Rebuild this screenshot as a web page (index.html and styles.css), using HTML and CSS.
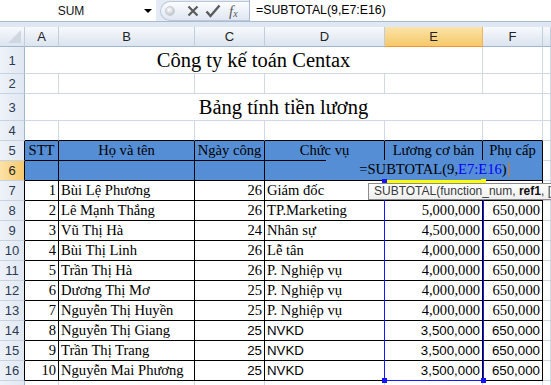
FILE: index.html
```html
<!DOCTYPE html>
<html lang="vi">

<head>
    <meta charset="UTF-8">
    <title>Bảng tính tiền lương</title>
    <link rel="stylesheet" href="styles.css">
</head>

<body>
    <div class="excel">
        <!-- thanh công thức -->
        <div class="toolbar">
            <div class="name-box"><span class="name">SUM</span><span class="arrow"></span></div>
            <div class="fx-buttons">
                <span class="dot"></span>
                <svg class="btn" width="14" height="14" viewBox="0 0 14 14">
                    <path d="M2.5 2.5 L11.5 11.5 M11.5 2.5 L2.5 11.5" stroke="#5b5b5b" stroke-width="2.2" fill="none" />
                </svg>
                <svg class="btn" width="16" height="14" viewBox="0 0 16 14">
                    <path d="M1.5 7.5 L5.5 12 L14.5 1.5" stroke="#5b5b5b" stroke-width="2.4" fill="none" />
                </svg>
                <span class="fx"><i>f</i><sub>x</sub></span>
            </div>
            <div class="formula-input">=SUBTOTAL(9,E7:E16)</div>
        </div>
        <div class="band"></div>

        <!-- bảng tính -->
        <div class="sheet">
            <table>
                <colgroup>
                    <col class="c-rh">
                    <col class="c-a">
                    <col class="c-b">
                    <col class="c-c">
                    <col class="c-d">
                    <col class="c-e">
                    <col class="c-f">
                    <col class="c-g">
                </colgroup>
                <tr class="col-head">
                    <th class="corner"><span class="tri"></span></th>
                    <th>A</th>
                    <th>B</th>
                    <th>C</th>
                    <th>D</th>
                    <th class="sel">E</th>
                    <th>F</th>
                    <th></th>
                </tr>
                <tr class="title">
                    <th class="rh">1</th>
                    <td colspan="5" class="center">Công ty kế toán Centax</td>
                    <td></td>
                    <td></td>
                </tr>
                <tr>
                    <th class="rh">2</th>
                    <td></td><td></td><td></td><td></td><td></td><td></td><td></td>
                </tr>
                <tr class="title">
                    <th class="rh">3</th>
                    <td colspan="6" class="center">Bảng tính tiền lương</td>
                    <td></td>
                </tr>
                <tr class="above">
                    <th class="rh">4</th>
                    <td></td><td></td><td></td><td></td><td></td><td></td><td></td>
                </tr>
                <tr class="head">
                    <th class="rh">5</th>
                    <td>STT</td>
                    <td>Họ và tên</td>
                    <td>Ngày công</td>
                    <td>Chức vụ</td>
                    <td>Lương cơ bản</td>
                    <td>Phụ cấp</td>
                    <td class="out"></td>
                </tr>
                <tr class="head">
                    <th class="rh sel">6</th>
                    <td></td><td></td><td></td><td></td><td></td><td></td>
                    <td class="out"></td>
                </tr>
                <tr class="row">
                    <th class="rh">7</th>
                    <td class="num">1</td><td>Bùi Lệ Phương</td><td class="num">26</td><td>Giám đốc</td>
                    <td class="num"></td><td class="num"></td><td class="out"></td>
                </tr>
                <tr class="row">
                    <th class="rh">8</th>
                    <td class="num">2</td><td>Lê Mạnh Thắng</td><td class="num">26</td><td>TP.Marketing</td>
                    <td class="num">5,000,000</td><td class="num">650,000</td><td class="out"></td>
                </tr>
                <tr class="row">
                    <th class="rh">9</th>
                    <td class="num">3</td><td>Vũ Thị Hà</td><td class="num">24</td><td>Nhân sự</td>
                    <td class="num">4,500,000</td><td class="num">650,000</td><td class="out"></td>
                </tr>
                <tr class="row">
                    <th class="rh">10</th>
                    <td class="num">4</td><td>Bùi Thị Linh</td><td class="num">26</td><td>Lễ tân</td>
                    <td class="num">4,000,000</td><td class="num">650,000</td><td class="out"></td>
                </tr>
                <tr class="row">
                    <th class="rh">11</th>
                    <td class="num">5</td><td>Trần Thị Hà</td><td class="num">26</td><td>P. Nghiệp vụ</td>
                    <td class="num">4,000,000</td><td class="num">650,000</td><td class="out"></td>
                </tr>
                <tr class="row">
                    <th class="rh">12</th>
                    <td class="num">6</td><td>Dương Thị Mơ</td><td class="num">25</td><td>P. Nghiệp vụ</td>
                    <td class="num">4,000,000</td><td class="num">650,000</td><td class="out"></td>
                </tr>
                <tr class="row">
                    <th class="rh">13</th>
                    <td class="num">7</td><td>Nguyễn Thị Huyền</td><td class="num">25</td><td>P. Nghiệp vụ</td>
                    <td class="num">4,000,000</td><td class="num">650,000</td><td class="out"></td>
                </tr>
                <tr class="row">
                    <th class="rh">14</th>
                    <td class="num">8</td><td>Nguyễn Thị Giang</td><td class="num sans">25</td><td class="sans">NVKD</td>
                    <td class="num sans">3,500,000</td><td class="num sans">650,000</td><td class="out"></td>
                </tr>
                <tr class="row">
                    <th class="rh">15</th>
                    <td class="num">9</td><td>Trần Thị Trang</td><td class="num sans">25</td><td class="sans">NVKD</td>
                    <td class="num sans">3,500,000</td><td class="num sans">650,000</td><td class="out"></td>
                </tr>
                <tr class="row">
                    <th class="rh">16</th>
                    <td class="num">10</td><td>Nguyễn Mai Phương</td><td class="num sans">25</td><td class="sans">NVKD</td>
                    <td class="num sans">3,500,000</td><td class="num sans">650,000</td><td class="out"></td>
                </tr>
                <tr>
                    <th class="rh"></th>
                    <td></td><td></td><td></td><td></td><td></td><td></td><td></td>
                </tr>
            </table>

            <!-- ô đang sửa E6 -->
            <div class="edit-cell">=SUBTOTAL(9,<span class="ref">E7:E16</span>)<span class="caret"></span></div>

            <!-- vùng tham chiếu E7:E16 -->
            <div class="range">
                <span class="top-bar"></span>
                <span class="handle tl"></span>
                <span class="handle tr"></span>
                <span class="handle bl"></span>
                <span class="handle br"></span>
            </div>

            <!-- gợi ý hàm -->
            <div class="tip">SUBTOTAL(function_num, <b>ref1</b>, [</div>
        </div>
    </div>
</body>

</html>
```

FILE: styles.css
```css
* {
    margin: 0;
    padding: 0;
    box-sizing: border-box;
}

body {
    width: 551px;
    height: 385px;
    overflow: hidden;
    background-color: #fff;
    font-family: "Liberation Serif", "Times New Roman", serif;
}

.excel {
    width: 551px;
    height: 385px;
    overflow: hidden;
}

/* thanh công thức */
.toolbar {
    display: flex;
    height: 22px;
    background-color: #e4ebf5;
    border-bottom: 1px solid #a9bbd3;
}

.name-box {
    width: 156px;
    display: flex;
    align-items: center;
    background-color: #fff;
    font: 12px "Liberation Sans", Arial, sans-serif;
    color: #111;
}

.name-box .name {
    flex: 1;
    text-align: center;
    padding-left: 4px;
}

.name-box .arrow {
    width: 0;
    height: 0;
    margin: 1px 4px 0 6px;
    border-top: 4px solid #000;
    border-left: 4px solid transparent;
    border-right: 4px solid transparent;
}

.fx-buttons {
    width: 89px;
    margin: 1px 0 0 4px;
    display: flex;
    align-items: center;
    gap: 5px;
    padding-left: 4px;
    border: 1px solid #b9c8da;
    border-right: none;
    border-radius: 11px 0 0 11px;
    background: linear-gradient(#fbfcfe, #dfe7f2);
}

.fx-buttons .dot {
    width: 10px;
    height: 10px;
    border-radius: 50%;
    background: radial-gradient(circle at 40% 35%, #fff, #c4c8cd 70%);
    border: 1px solid #c9ced6;
    margin-right: 6px;
}

.fx-buttons .fx {
    font-family: "Liberation Serif", serif;
    font-size: 15px;
    color: #5b5b5b;
    margin-left: 3px;
    line-height: 1;
}

.fx-buttons .fx sub {
    font-size: 10px;
    font-style: italic;
    vertical-align: -1px;
}

.formula-input {
    flex: 1;
    background-color: #fff;
    border-left: 1px solid #a9bbd3;
    padding-left: 6px;
    font: 12.3px "Liberation Sans", Arial, sans-serif;
    line-height: 21px;
    color: #000;
}

.band {
    height: 5px;
    background-color: #dfe7f2;
}

/* bảng tính */
.sheet {
    position: relative;
}

table {
    width: 551px;
    table-layout: fixed;
    border-collapse: separate;
    border-spacing: 0;
}

.c-rh { width: 25px; }
.c-a { width: 34px; }
.c-b { width: 136px; }
.c-c { width: 70px; }
.c-d { width: 120px; }
.c-e { width: 98px; }
.c-f { width: 60px; }
.c-g { width: 8px; }

tr {
    height: 20px;
}

td,
th {
    padding: 0 2px 1px;
    border-right: 1px solid #d0d7e5;
    border-bottom: 1px solid #d0d7e5;
    white-space: nowrap;
    overflow: hidden;
    vertical-align: bottom;
    font-size: 14.6px;
    line-height: 17px;
    font-weight: normal;
    text-align: left;
}

.col-head th {
    height: 20px;
    vertical-align: middle;
    text-align: center;
    font: 13px "Liberation Sans", Arial, sans-serif;
    color: #222;
    background: linear-gradient(#f7f9fc, #dce4ef);
    border-right: 1px solid #c0cddd;
    border-bottom: 1px solid #9eb6ce;
}

.col-head th.sel {
    background: linear-gradient(#fbe3a9, #f6c86a);
    border-bottom-color: #f29536;
    border-right-color: #f2b35c;
}

.col-head .corner {
    position: relative;
}

.corner .tri {
    position: absolute;
    right: 3px;
    bottom: 3px;
    width: 0;
    height: 0;
    border-left: 13px solid transparent;
    border-bottom: 13px solid #cfd7e2;
}

th.rh {
    text-align: center;
    vertical-align: middle;
    padding: 0;
    font: 13px "Liberation Sans", Arial, sans-serif;
    color: #2b3a55;
    background: linear-gradient(90deg, #eef2f8, #e1e8f2);
    border-right: 1px solid #9eb6ce;
    border-bottom: 1px solid #c5d2e3;
}

th.rh.sel {
    background: linear-gradient(90deg, #fbe2a6, #f6c86b);
    color: #222;
}

.title {
    height: 27px;
}

.title td {
    font-size: 20.5px;
    line-height: 24px;
    padding-bottom: 1px;
}

.center {
    text-align: center;
}

/* đường viền đen */
.above td:not(:last-child) {
    border-bottom-color: #000;
}

.head th.rh,
.row th.rh {
    border-right-color: #000;
}

.head td:not(.out),
.row td:not(.out) {
    border-right-color: #000;
    border-bottom-color: #000;
}

.head td:not(.out) {
    background-color: #558ed5;
    text-align: center;
}

.num {
    text-align: right;
}

.sans {
    font-family: "Liberation Sans", Arial, sans-serif;
    font-size: 13.3px;
}

/* ô đang sửa */
.edit-cell {
    position: absolute;
    left: 326px;
    top: 133px;
    width: 216px;
    height: 19px;
    background-color: #558ed5;
    text-align: center;
    font-size: 14.6px;
    line-height: 17px;
    padding-top: 1px;
    color: #000;
}

.edit-cell .ref {
    color: #0000ff;
}

.edit-cell .caret {
    display: inline-block;
    width: 1px;
    height: 15px;
    margin-left: 1px;
    vertical-align: -3px;
    background-color: #d8781e;
}

/* vùng tham chiếu */
.range {
    position: absolute;
    left: 384px;
    top: 153px;
    width: 100px;
    height: 201px;
    border: 1px solid #1515ff;
}

.range .top-bar {
    position: absolute;
    left: -1px;
    right: -1px;
    top: -1px;
    height: 3px;
    background-color: #ffff00;
}

.range .handle {
    position: absolute;
    width: 5px;
    height: 5px;
    background-color: #1515ff;
}

.handle.tl { left: -3px; top: -2px; }
.handle.tr { right: -3px; top: -2px; background-color: #ffff00; }
.handle.bl { left: -3px; bottom: -3px; }
.handle.br { right: -3px; bottom: -3px; }

/* gợi ý hàm */
.tip {
    position: absolute;
    left: 368px;
    top: 156px;
    width: 200px;
    height: 17px;
    padding-left: 5px;
    background: linear-gradient(#ffffff, #eeeeee);
    border: 1px solid #8c8c8c;
    font: 12px "Liberation Sans", Arial, sans-serif;
    line-height: 15px;
    color: #3a3a3a;
    white-space: nowrap;
}

.tip b {
    color: #111;
}
```
